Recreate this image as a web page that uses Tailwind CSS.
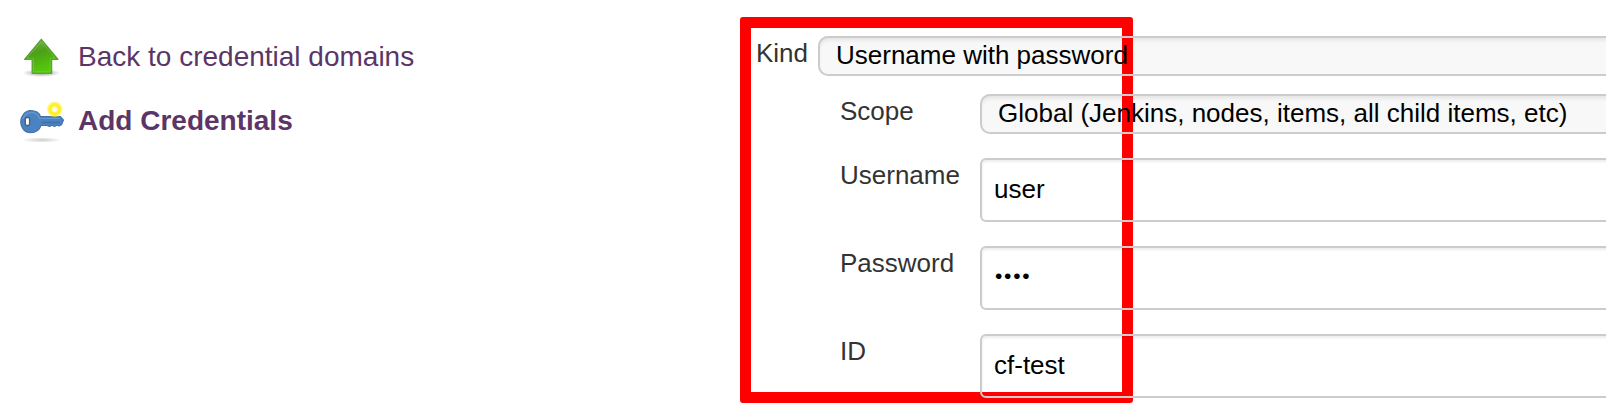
<!DOCTYPE html>
<html lang="en">
<head>
<meta charset="utf-8">
<title>Add Credentials</title>
<script src="https://cdn.jsdelivr.net/npm/@tailwindcss/browser@4"></script>
</head>
<body class="bg-white">
<div class="relative flex h-[404px] w-[1606px] overflow-hidden font-['Liberation_Sans',Arial,sans-serif] text-[26px] leading-[30px] text-[#333]">
  <nav class="flex w-[756px] shrink-0 flex-col gap-8 pt-10 pl-5 text-[28px] leading-8 text-[#5c3566]">
    <a class="flex h-8 items-center gap-[14px]">
      <svg class="h-11 w-11 shrink-0" viewBox="0 0 44 44">
        <defs>
          <linearGradient id="green" x1="0" y1="0" x2="0.3" y2="1"><stop offset="0" stop-color="#85b666"/><stop offset=".45" stop-color="#4ba016"/><stop offset="1" stop-color="#55c80c"/></linearGradient>
          <radialGradient id="shade"><stop offset="0" stop-color="#000" stop-opacity=".4"/><stop offset="1" stop-color="#000" stop-opacity="0"/></radialGradient>
        </defs>
        <ellipse cx="21.500" cy="39" rx="19" ry="4" fill="url(#shade)"/>
        <path d="M21.300 5.300 38 25.300H31.600V39.300H12.200V25.300H4.600Z" fill="url(#green)" stroke="#5a9f38" stroke-width="1.300" stroke-linejoin="round"/>
        <path d="M21.300 7.500 35 24.200H30.200V37.800H13.500V24.200H7Z" fill="none" stroke="#8bd45a" stroke-opacity=".4"/>
      </svg>
      <span class="pt-[2px]">Back to credential domains</span>
    </a>
    <a class="flex h-8 items-center gap-[14px] font-bold">
      <svg class="h-11 w-11 shrink-0" viewBox="0 0 44 44">
        <defs><radialGradient id="glow"><stop offset="0" stop-color="#fffbd0"/><stop offset=".3" stop-color="#fff66a"/><stop offset=".48" stop-color="#ffed22"/><stop offset=".7" stop-color="#fff23a"/><stop offset="1" stop-color="#fff86a" stop-opacity="0"/></radialGradient></defs>
        <ellipse cx="21.500" cy="42" rx="20" ry="2.800" fill="url(#shade)" opacity=".5"/>
        <path d="M10.500 12.500C16 12.500 19.500 15.500 20.500 18.500H40.500L43.500 22 41.700 26.500 39.200 28 37 27 34.500 28.600 32 27.200 29.500 28.500 27 27.500H21C19.500 32 15.500 34.700 10.500 34.700 4.800 34.700.7 30 .7 24S5 12.500 10.500 12.500Z" fill="#4b82c1" stroke="#4571a8" stroke-width="1.100" stroke-linejoin="round"/>
        <path d="M3 21C4.500 16.500 8 14.300 11.500 14.300S18.500 17 19.500 20.500H40" fill="none" stroke="#80ade0" stroke-width="1.200" stroke-opacity=".5"/>
        <path d="M22 24.500H40" stroke="#3c70af" stroke-width="1.500"/>
        <rect x="5.300" y="19.500" width="4.300" height="8" rx="1.500" fill="#fff" stroke="#4b5f78" stroke-width="1.400"/>
        <circle cx="34.700" cy="11.300" r="8.600" fill="url(#glow)"/>
        <circle cx="34.700" cy="11.300" r="2.600" fill="#fffce0"/>
      </svg>
      <span class="pt-[2px]">Add Credentials</span>
    </a>
  </nav>

  <form class="flex grow flex-col pt-9">
    <div class="flex h-10">
      <label class="w-[62px] shrink-0 pt-[2px]">Kind</label>
      <div class="relative grow">
        <div class="absolute inset-0 -right-4 rounded-[10px] bg-[#f8f8f8] shadow-[inset_0_4px_5px_rgba(0,0,0,0.09)]"></div>
        <div class="relative z-20 -mr-4 h-10 rounded-[10px] border-2 border-[#ccc] pt-[2px] pl-4 text-black">Username with password</div>
      </div>
    </div>
    <div class="mt-[18px] flex h-10 pl-[84px]">
      <label class="w-[140px] shrink-0 pt-[2px]">Scope</label>
      <div class="relative grow">
        <div class="absolute inset-0 -right-4 rounded-[10px] bg-[#f8f8f8] shadow-[inset_0_4px_5px_rgba(0,0,0,0.09)]"></div>
        <div class="relative z-20 -mr-4 h-10 rounded-[10px] border-2 border-[#ccc] pt-[2px] pl-4 text-black">Global (Jenkins, nodes, items, all child items, etc)</div>
      </div>
    </div>
    <div class="mt-6 flex h-16 pl-[84px]">
      <label class="w-[140px] shrink-0 pt-[2px]">Username</label>
      <div class="relative z-20 -mr-4 grow rounded-md border-2 border-[#ccc] pt-[14px] pl-3 text-black shadow-[inset_0_2px_3px_rgba(0,0,0,0.075)]">user</div>
    </div>
    <div class="mt-6 flex h-16 pl-[84px]">
      <label class="w-[140px] shrink-0 pt-[2px]">Password</label>
      <div class="relative z-20 -mr-4 grow rounded-md border-2 border-[#ccc] pt-[13px] pl-[13px] text-[21px] tracking-[1.750px] text-black shadow-[inset_0_2px_3px_rgba(0,0,0,0.075)]">••••</div>
    </div>
    <div class="mt-6 flex h-16 pl-[84px]">
      <label class="w-[140px] shrink-0 pt-[2px]">ID</label>
      <div class="relative z-20 -mr-4 grow rounded-md border-2 border-[#ccc] pt-[14px] pl-3 text-black shadow-[inset_0_2px_3px_rgba(0,0,0,0.075)]">cf-test</div>
    </div>
  </form>

  <!-- Highlight frame: above the field fills, below their borders and text -->
  <div class="pointer-events-none absolute top-[17px] left-[740px] z-10 h-[386px] w-[393px] rounded-[3px] border-[11px] border-[#f00]"></div>
</div>
</body>
</html>
